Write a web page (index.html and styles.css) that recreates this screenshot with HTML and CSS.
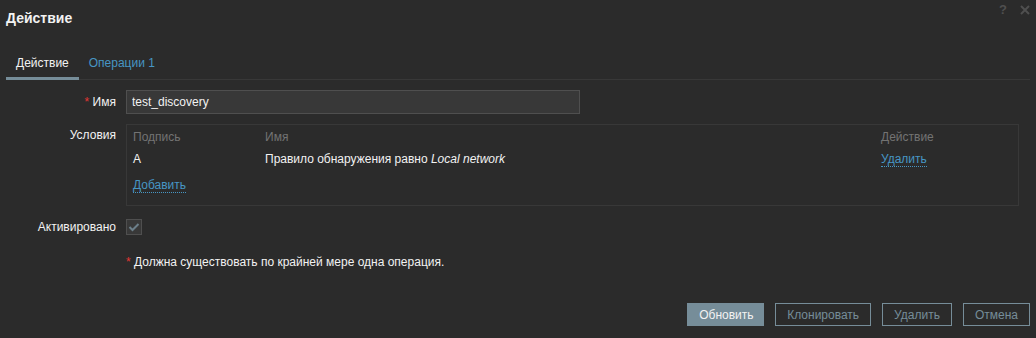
FILE: index.html
```html
<!DOCTYPE html>
<html lang="ru">
<head>
    <meta charset="UTF-8">
    <title>Действие</title>
    <link rel="stylesheet" href="styles.css">
</head>
<body>
<div class="dialog">
    <div class="head">
        <h4 class="title">Действие</h4>
        <div class="head-tools">
            <span class="help">?</span>
            <svg class="close" width="10" height="10" viewBox="0 0 10 10">
                <path d="M1 1 L9 9 M9 1 L1 9" stroke="#4f4f4f" stroke-width="2"/>
            </svg>
        </div>
    </div>

    <div class="nav">
        <span class="tab active">Действие</span>
        <span class="tab">Операции <span class="count">1</span></span>
    </div>

    <div class="form">
        <div class="row">
            <label class="label"><span class="req">*</span> Имя</label>
            <div class="field">
                <input type="text" class="text-input" value="test_discovery">
            </div>
        </div>
        <div class="row row-cond">
            <label class="label">Условия</label>
            <div class="field">
                <div class="cond-box">
                    <div class="cond-line cond-head">
                        <span>Подпись</span>
                        <span>Имя</span>
                        <span>Действие</span>
                    </div>
                    <div class="cond-line cond-item">
                        <span>A</span>
                        <span>Правило обнаружения равно <em>Local network</em></span>
                        <span><a class="link">Удалить</a></span>
                    </div>
                    <div class="cond-line">
                        <span><a class="link">Добавить</a></span>
                    </div>
                </div>
            </div>
        </div>
        <div class="row row-check">
            <label class="label">Активировано</label>
            <div class="field">
                <span class="checkbox">
                    <svg width="12" height="10" viewBox="0 0 12 10">
                        <path d="M1.5 5 L4.5 8 L10.5 2" stroke="#6c7f8a" stroke-width="2" fill="none"/>
                    </svg>
                </span>
            </div>
        </div>
        <div class="row row-note">
            <span></span>
            <div class="field note"><span class="req">*</span> Должна существовать по крайней мере одна операция.</div>
        </div>
    </div>

    <div class="footer">
        <button class="btn main-btn">Обновить</button>
        <button class="btn alt-btn">Клонировать</button>
        <button class="btn alt-btn">Удалить</button>
        <button class="btn alt-btn">Отмена</button>
    </div>
</div>
</body>
</html>
```

FILE: styles.css
```css
body {
    margin: 0;
    background: #2b2b2b;
    color: #f2f2f2;
    font-family: "Liberation Sans", Arial, sans-serif;
    font-size: 12px;
}

.dialog {
    padding: 0 6px;
}

.head {
    height: 36px;
    display: flex;
    justify-content: space-between;
}

.title {
    margin: 0;
    font-size: 14px;
    font-weight: bold;
    line-height: 36px;
    color: #f2f2f2;
}

.head-tools {
    display: flex;
    gap: 13px;
    padding: 3px 0 0 0;
    height: 14px;
}

.help {
    font-size: 13px;
    font-weight: bold;
    line-height: 14px;
    color: #4f4f4f;
}

.close {
    margin-top: 2px;
}

.nav {
    margin-top: 16px;
    display: flex;
    border-bottom: 1px solid #383838;
}

.tab {
    padding: 4px 10px 7px;
    line-height: 14px;
    border-bottom: 3px solid transparent;
    margin-bottom: -1px;
    color: #4796c4;
    cursor: pointer;
}

.tab.active {
    color: #f2f2f2;
    border-bottom-color: #768d99;
}

.form {
    margin-top: 10px;
}

.row {
    display: grid;
    grid-template-columns: 110px 1fr;
    column-gap: 10px;
}

.label {
    text-align: right;
    line-height: 24px;
}

.req {
    color: #e33734;
}

.text-input {
    box-sizing: border-box;
    width: 454px;
    height: 24px;
    margin: 0;
    padding: 0 5px;
    background: #383838;
    border: 1px solid #4f4f4f;
    color: #f2f2f2;
    font-family: inherit;
    font-size: 12px;
    outline: none;
}

.row-cond {
    margin-top: 10px;
}

.row-cond .label {
    line-height: 14px;
    padding-top: 4px;
}

.cond-box {
    border: 1px solid #383838;
    padding: 5px 6px 13px;
    margin-right: 11px;
}

.cond-line {
    display: grid;
    grid-template-columns: 132px 1fr 131px;
    line-height: 14px;
}

.cond-head {
    color: #737373;
    margin-bottom: 8px;
}

.cond-item {
    margin-bottom: 12px;
}

.link {
    color: #4796c4;
    border-bottom: 1px dotted #4796c4;
    cursor: pointer;
}

.row-check {
    margin-top: 13px;
}

.row-check .label {
    line-height: 16px;
}

.checkbox {
    box-sizing: border-box;
    display: flex;
    align-items: center;
    justify-content: center;
    width: 16px;
    height: 16px;
    border: 1px solid #4f4f4f;
    background: #383838;
}

.row-note {
    margin-top: 20px;
}

.note {
    line-height: 14px;
}

.footer {
    margin-top: 34px;
    display: flex;
    justify-content: flex-end;
    gap: 11px;
}

.btn {
    box-sizing: border-box;
    height: 23px;
    padding: 0 11px;
    font-family: inherit;
    font-size: 12px;
    cursor: pointer;
}

.main-btn {
    background: #768d99;
    border: 1px solid #768d99;
    color: #f2f2f2;
    width: 77px;
}

.alt-btn {
    background: transparent;
    border: 1px solid #768d99;
    color: #768d99;
}
```
